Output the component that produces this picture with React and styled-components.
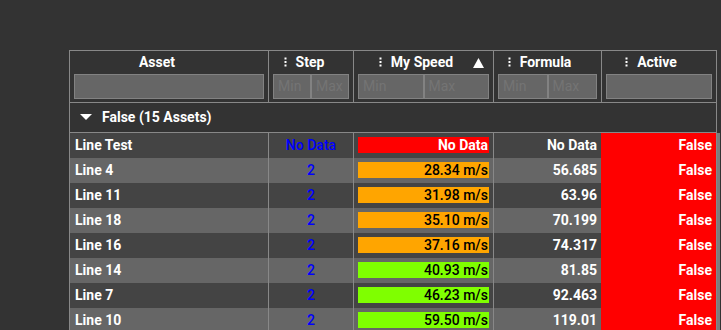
import React from "react";
import styled, { createGlobalStyle } from "styled-components";

const GlobalStyle = createGlobalStyle`
  html, body { margin: 0; padding: 0; background: #333333; overflow: hidden; }
  body { font-family: Roboto, "Noto Sans", "DejaVu Sans", sans-serif; }
`;

const LINE = "#888888";
const FONT = "14px";

const Page = styled.div`
  padding: 50px 0 0 69px;
`;

const Table = styled.div`
  display: grid;
  grid-template-columns: 199px 85px 140px 108px 116px 3px;
  grid-auto-rows: auto;
  width: max-content;
`;

const HeaderCell = styled.div`
  position: relative;
  display: flex;
  flex-direction: column;
  gap: 3px;
  padding: 2px 4px 3px 4px;
  border-top: 1px solid ${LINE};
  border-left: 1px solid ${LINE};
  border-bottom: 1px solid ${LINE};
  border-right: ${(p) => (p.$last ? `1px solid ${LINE}` : "none")};
  background: #333333;
`;

const TitleLine = styled.div`
  height: 18px;
  display: flex;
  align-items: center;
  justify-content: center;
  padding-right: ${(p) => p.$shift || 0}px;
`;

const TitleText = styled.span`
  position: relative;
  color: #ffffff;
  font-weight: 700;
  font-size: ${FONT};
  line-height: 18px;
`;

const Kebab = styled.svg`
  position: absolute;
  right: calc(100% + 9px);
  top: 4px;
`;

const SortIcon = styled.svg`
  position: absolute;
  right: 9px;
  top: 7px;
`;

const FilterRow = styled.div`
  display: flex;
  height: 25px;
`;

const FilterBox = styled.div`
  flex: 1;
  box-sizing: border-box;
  height: 25px;
  background: #666666;
  border: 1px solid #828282;
  color: #747474;
  font-size: ${FONT};
  line-height: 23px;
  padding-left: 4px;
  overflow: hidden;
`;

const Spacer = styled.div``;

const GroupRow = styled.div`
  grid-column: 1 / 6;
  box-sizing: border-box;
  height: 30px;
  display: flex;
  align-items: center;
  gap: 10px;
  padding: 0 0 2px 10px;
  border-left: 1px solid ${LINE};
  border-right: 1px solid ${LINE};
  border-bottom: 1px solid ${LINE};
  color: #ffffff;
  font-weight: 700;
  font-size: ${FONT};
`;

const Cell = styled.div`
  box-sizing: border-box;
  height: 25px;
  display: flex;
  align-items: center;
  justify-content: ${(p) => p.$align || "flex-start"};
  padding: ${(p) => p.$pad || "0 5px"};
  padding-bottom: 2px;
  background: ${(p) => p.$bg};
  border-left: 1px solid ${(p) => p.$lineColor || LINE};
  border-right: ${(p) => (p.$last ? `1px solid ${LINE}` : "none")};
  color: ${(p) => p.$color || "#ffffff"};
  font-weight: ${(p) => p.$weight || 700};
  font-size: ${FONT};
  white-space: nowrap;
`;

const BarCell = styled.div`
  box-sizing: border-box;
  height: 25px;
  padding: 4px 4px 5px 4px;
  background: ${(p) => p.$bg};
  border-left: 1px solid ${LINE};
`;

const Bar = styled.div`
  height: 16px;
  background: ${(p) => p.$color};
  display: flex;
  align-items: center;
  justify-content: flex-end;
  padding: 0 1px 1px 0;
  box-sizing: border-box;
  color: ${(p) => (p.$light ? "#ffffff" : "#000000")};
  font-weight: ${(p) => (p.$light ? 700 : 500)};
  font-size: ${FONT};
  white-space: nowrap;
`;

const ScrollTrack = styled.div`
  grid-column: 6;
  grid-row: 3 / span 8;
  background: #7d7d7d;
`;

const KebabIcon = () => (
  <Kebab width="3" height="10" viewBox="0 0 3 10">
    <rect x="0.5" y="0.5" width="2" height="2" fill="#fff" />
    <rect x="0.5" y="4" width="2" height="2" fill="#fff" />
    <rect x="0.5" y="7.5" width="2" height="2" fill="#fff" />
  </Kebab>
);

const columns = [
  { title: "Asset", shift: 24, kebab: false, filter: "text" },
  { title: "Step", shift: 2, kebab: true, filter: "range" },
  { title: "My Speed", shift: 3, kebab: true, filter: "range", sort: true },
  { title: "Formula", shift: 4, kebab: true, filter: "range" },
  { title: "Active", shift: 4, kebab: true, filter: "text" },
];

const ORANGE = "#ffa500";
const GREEN = "#7fff00";
const RED = "#ff0000";

const rows = [
  { name: "Line Test", step: "No Data", speed: "No Data", color: RED, formula: "No Data" },
  { name: "Line 4", step: "2", speed: "28.34 m/s", color: ORANGE, formula: "56.685" },
  { name: "Line 11", step: "2", speed: "31.98 m/s", color: ORANGE, formula: "63.96" },
  { name: "Line 18", step: "2", speed: "35.10 m/s", color: ORANGE, formula: "70.199" },
  { name: "Line 16", step: "2", speed: "37.16 m/s", color: ORANGE, formula: "74.317" },
  { name: "Line 14", step: "2", speed: "40.93 m/s", color: GREEN, formula: "81.85" },
  { name: "Line 7", step: "2", speed: "46.23 m/s", color: GREEN, formula: "92.463" },
  { name: "Line 10", step: "2", speed: "59.50 m/s", color: GREEN, formula: "119.01" },
];

export default function App() {
  return (
    <>
      <GlobalStyle />
      <Page>
        <Table>
          {columns.map((c, i) => (
            <HeaderCell key={c.title} $last={i === columns.length - 1}>
              <TitleLine $shift={c.shift}>
                <TitleText>
                  {c.kebab && <KebabIcon />}
                  {c.title}
                </TitleText>
              </TitleLine>
              {c.sort && (
                <SortIcon width="11" height="10" viewBox="0 0 11 10">
                  <polygon points="5.5,0 11,10 0,10" fill="#fff" />
                </SortIcon>
              )}
              <FilterRow>
                {c.filter === "text" ? (
                  <FilterBox />
                ) : (
                  <>
                    <FilterBox>Min</FilterBox>
                    <FilterBox>Max</FilterBox>
                  </>
                )}
              </FilterRow>
            </HeaderCell>
          ))}
          <Spacer />
          <GroupRow>
            <svg width="12" height="6" viewBox="0 0 12 6">
              <polygon points="0,0 12,0 6,6" fill="#fff" />
            </svg>
            False (15 Assets)
          </GroupRow>
          <Spacer />
          {rows.map((r, i) => {
            const bg = i % 2 === 0 ? "#444444" : "#666666";
            return (
              <React.Fragment key={r.name}>
                <Cell $bg={bg}>{r.name}</Cell>
                <Cell $bg={bg} $align="center" $color="#0000ff" $weight={500}>
                  {r.step}
                </Cell>
                <BarCell $bg={bg}>
                  <Bar $color={r.color} $light={r.color === RED}>
                    {r.speed}
                  </Bar>
                </BarCell>
                <Cell $bg={bg} $align="flex-end" $pad="0 4px">
                  {r.formula}
                </Cell>
                <Cell $bg={RED} $lineColor={RED} $align="flex-end" $pad="0 4px" $last>
                  False
                </Cell>
              </React.Fragment>
            );
          })}
          <ScrollTrack />
        </Table>
      </Page>
    </>
  );
}
